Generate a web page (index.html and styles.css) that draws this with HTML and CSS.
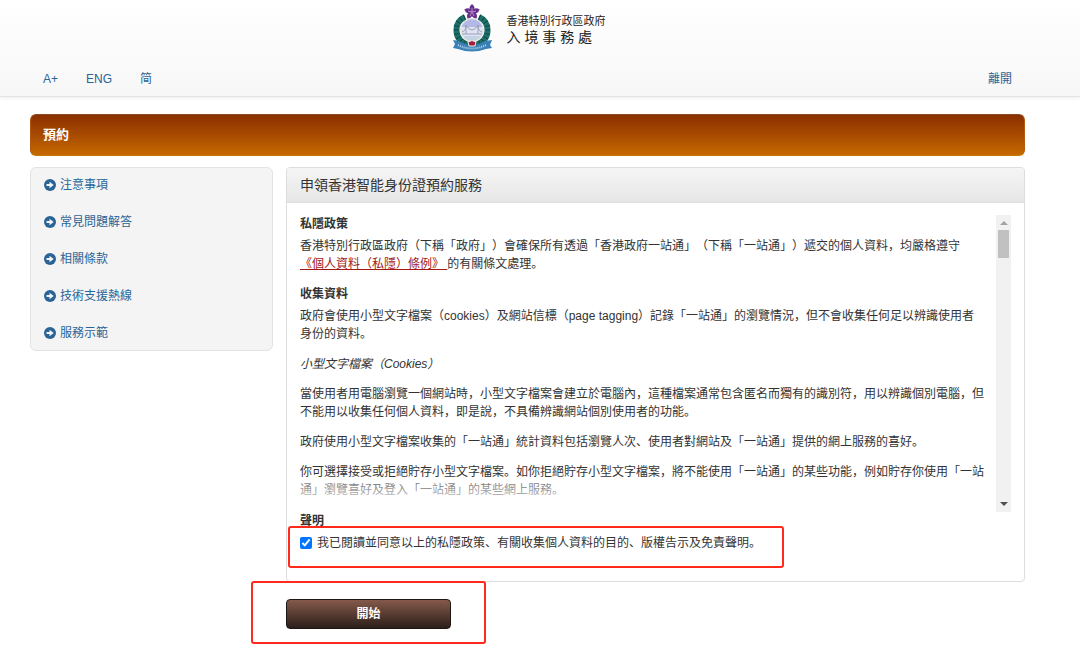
FILE: index.html
```html
<!DOCTYPE html>
<html lang="zh-CN">
<head>
    <meta charset="UTF-8">
    <meta name="viewport" content="width=device-width, initial-scale=1.0">
    <title>預約</title>
    <link rel="stylesheet" href="styles.css">
</head>
<body>
    <header class="header">
        <div class="brand">
            <svg class="emblem" viewBox="0 0 40 50" width="40" height="50" aria-hidden="true">
                <!-- wreath -->
                <path d="M12 13Q3 17 3.500 27Q4 37 15 41M26 13Q35 17 34.500 27Q34 37 23 41" fill="none" stroke="#1d6f68" stroke-width="6"/>
                <path d="M12 13Q3 17 3.500 27Q4 37 15 41M26 13Q35 17 34.500 27Q34 37 23 41" fill="none" stroke="#0f4a4c" stroke-width="5" stroke-dasharray="1 3"/>
                <!-- harbour -->
                <circle cx="19" cy="26" r="11.500" fill="#dfe3f4" stroke="#e9e4d6" stroke-width="1"/>
                <path d="M8.500 23a11 11 0 0 1 21 0z" fill="#b3b8e6"/>
                <path d="M9 30h20M13 21v9M25 21v9M9 28q4-1 4-7q6 10 12 0q0 6 4 7" fill="none" stroke="#9aa0b5" stroke-width="1"/>
                <path d="M10 32h18a11 11 0 0 1-18 0z" fill="#c4d3e4"/>
                <!-- ribbon -->
                <path d="M0 36l6 1q13 8 26 0l7-1-2 5 2 3-6 1q-14 5-28 0l-5-1 2-4z" fill="#3a7fb5"/>
                <path d="M5 41q14 7 28 0" fill="none" stroke="#b7d6ea" stroke-width="2" stroke-dasharray="1 1"/>
                <path d="M15 38q4-3 8 0l-1 4h-6z" fill="#a3203c" stroke="#eee" stroke-width="1"/>
                <!-- bauhinia -->
                <g fill="#66308c">
                    <path id="petal" d="M19 8Q14 4 19 0Q24 4 19 8z"/>
                    <use href="#petal" transform="rotate(72 19 8)"/>
                    <use href="#petal" transform="rotate(144 19 8)"/>
                    <use href="#petal" transform="rotate(216 19 8)"/>
                    <use href="#petal" transform="rotate(288 19 8)"/>
                </g>
                <path d="M19 8V4M19 8l4-1M19 8l2 4M19 8l-2 4M19 8l-4-1" stroke="#b58bc9" stroke-width="1"/>
            </svg>
            <div class="brand-text">
                <div class="brand-gov">香港特別行政區政府</div>
                <div class="brand-dept">入 境 事 務 處</div>
            </div>
        </div>
        <nav class="topnav">
            <a href="#">A+</a>
            <a href="#">ENG</a>
            <a href="#">简</a>
            <a href="#" class="exit">離開</a>
        </nav>
    </header>

    <main class="page">
        <h1 class="banner">預約</h1>
        <div class="columns">
            <ul class="sidebar">
                <li><a href="#"><svg class="arrow" viewBox="0 0 12 12" width="12" height="12" aria-hidden="true"><circle cx="6" cy="6" r="6"/><path d="M2.500 5h3V2.800L9.700 6 5.500 9.200V7h-3z"/></svg>注意事項</a></li>
                <li><a href="#"><svg class="arrow" viewBox="0 0 12 12" width="12" height="12" aria-hidden="true"><circle cx="6" cy="6" r="6"/><path d="M2.500 5h3V2.800L9.700 6 5.500 9.200V7h-3z"/></svg>常見問題解答</a></li>
                <li><a href="#"><svg class="arrow" viewBox="0 0 12 12" width="12" height="12" aria-hidden="true"><circle cx="6" cy="6" r="6"/><path d="M2.500 5h3V2.800L9.700 6 5.500 9.200V7h-3z"/></svg>相關條款</a></li>
                <li><a href="#"><svg class="arrow" viewBox="0 0 12 12" width="12" height="12" aria-hidden="true"><circle cx="6" cy="6" r="6"/><path d="M2.500 5h3V2.800L9.700 6 5.500 9.200V7h-3z"/></svg>技術支援熱線</a></li>
                <li><a href="#"><svg class="arrow" viewBox="0 0 12 12" width="12" height="12" aria-hidden="true"><circle cx="6" cy="6" r="6"/><path d="M2.500 5h3V2.800L9.700 6 5.500 9.200V7h-3z"/></svg>服務示範</a></li>
            </ul>

            <div class="content">
                <section class="card">
                    <h2 class="card-title">申領香港智能身份證預約服務</h2>
                    <div class="card-body">
                        <div class="policy">
                            <div class="policy-text">
                                <h3>私隱政策</h3>
                                <p>香港特別行政區政府（下稱「政府」）會確保所有透過「香港政府一站通」（下稱「一站通」）遞交的個人資料，均嚴格遵守<br><a href="#">《個人資料（私隱）條例》 </a>的有關條文處理。</p>
                                <h3>收集資料</h3>
                                <p>政府會使用小型文字檔案（cookies）及網站信標（page tagging）記錄「一站通」的瀏覽情況，但不會收集任何足以辨識使用者<br>身份的資料。</p>
                                <p><em>小型文字檔案（Cookies）</em></p>
                                <p>當使用者用電腦瀏覽一個網站時，小型文字檔案會建立於電腦內，這種檔案通常包含匿名而獨有的識別符，用以辨識個別電腦，但不能用以收集任何個人資料，即是說，不具備辨識網站個別使用者的功能。</p>
                                <p>政府使用小型文字檔案收集的「一站通」統計資料包括瀏覽人次、使用者對網站及「一站通」提供的網上服務的喜好。</p>
                                <p>你可選擇接受或拒絕貯存小型文字檔案。如你拒絕貯存小型文字檔案，將不能使用「一站通」的某些功能，例如貯存你使用「一站通」瀏覽喜好及登入「一站通」的某些網上服務。</p>
                            </div>
                            <div class="scrollbar" aria-hidden="true">
                                <span class="scroll-up"></span>
                                <span class="scroll-thumb"></span>
                                <span class="scroll-down"></span>
                            </div>
                        </div>
                        <h3>聲明</h3>
                        <div class="agree">
                            <input type="checkbox" id="agree" checked>
                            <label for="agree">我已閱讀並同意以上的私隱政策、有關收集個人資料的目的、版權告示及免責聲明。</label>
                            <span class="mark mark-agree"></span>
                        </div>
                    </div>
                </section>
                <div class="actions">
                    <button type="button" class="start">開始</button>
                    <span class="mark mark-start"></span>
                </div>
            </div>
        </div>
    </main>
</body>
</html>
```

FILE: styles.css
```css
* {
    box-sizing: border-box;
}
body {
    margin: 0;
    font-family: "Liberation Sans", "Noto Sans CJK SC", sans-serif;
    font-size: 12px;
    line-height: 18px;
    color: #333;
    background: #fff;
    text-spacing-trim: space-all;
}
h1, h2, h3, p, ul {
    margin: 0;
    padding: 0;
}
a {
    color: #2a6496;
    text-decoration: none;
}
.header {
    padding-top: 4px;
    background: linear-gradient(#fff, #f7f7f7);
    border-bottom: 1px solid #e3e3e3;
    box-shadow: 0 1px 4px rgba(0, 0, 0, 0.08);
}
.brand {
    display: flex;
    justify-content: center;
    gap: 14px;
    padding-right: 22px;
}
.brand-text {
    padding-top: 8px;
    color: #222;
}
.brand-gov {
    font-size: 11px;
    line-height: 18px;
}
.brand-dept {
    font-size: 14px;
    line-height: 14px;
}
.topnav {
    display: flex;
    gap: 28px;
    padding: 16px 68px 8px 43px;
}
.exit {
    margin-left: auto;
}
.page {
    padding: 17px 55px 24px 30px;
}
.banner {
    padding: 12px;
    border: 1px solid #b05a10;
    border-top-color: #8a4a28;
    border-bottom-color: #c97800;
    border-radius: 6px;
    background: linear-gradient(#8a2f00, #c66800);
    color: #fff;
    font-size: 13px;
    line-height: 16px;
}
.columns {
    display: flex;
    align-items: flex-start;
    gap: 13px;
    margin-top: 11px;
}
.sidebar {
    flex: 0 0 243px;
    display: flex;
    flex-direction: column;
    gap: 19px;
    padding: 8px 13px;
    border: 1px solid #e3e3e3;
    border-radius: 6px;
    background: #f4f4f4;
    list-style: none;
}
.sidebar a {
    display: flex;
    align-items: center;
    gap: 4px;
}
.arrow circle {
    fill: #2a6496;
}
.arrow path {
    fill: #f4f4f4;
}
.content {
    flex: 1;
    min-width: 0;
}
.card {
    border: 1px solid #ddd;
    border-radius: 4px;
}
.card-title {
    padding: 8px 13px;
    border-bottom: 1px solid #ddd;
    border-radius: 3px 3px 0 0;
    background: linear-gradient(#f5f5f5, #e6e6e6);
    font-size: 14px;
    font-weight: 400;
}
.card-body {
    padding: 12px 13px 29px;
}
.card-body h3 {
    font-size: 12px;
    margin-bottom: 4px;
}
.policy {
    display: flex;
    height: 297px;
}
.policy-text {
    position: relative;
    flex: 1;
    padding-right: 10px;
    overflow: hidden;
}
/* fades out the last visible line */
.policy-text::after {
    content: "";
    position: absolute;
    left: 0;
    right: 0;
    bottom: 0;
    height: 32px;
    background: linear-gradient(rgba(255, 255, 255, 0.3), #fff);
}
.policy-text p {
    margin-bottom: 12px;
}
.policy-text a {
    color: #a01818;
    text-decoration: underline;
    white-space: pre-wrap;
}
.scrollbar {
    flex: 0 0 15px;
    display: flex;
    flex-direction: column;
    align-items: center;
    padding: 6px 0;
    background: #f1f1f1;
}
.scroll-up,
.scroll-down {
    border: 4px solid transparent;
}
.scroll-up {
    border-top: 0;
    border-bottom-color: #a3a3a3;
}
.scroll-down {
    margin-top: auto;
    border-bottom: 0;
    border-top-color: #505050;
}
.scroll-thumb {
    width: 11px;
    height: 28px;
    margin-top: 5px;
    background: #c1c1c1;
}
.agree {
    position: relative;
    display: flex;
    align-items: center;
    gap: 5px;
}
.agree input {
    width: 12px;
    height: 12px;
    margin: 0;
    accent-color: #0075ff;
}
.actions {
    position: relative;
    padding-top: 17px;
}
.start {
    display: block;
    width: 165px;
    padding: 5px 12px;
    border: 1px solid #1f1713;
    border-radius: 4px;
    background: linear-gradient(#85594b, #2b1f1a);
    color: #fff;
    font: inherit;
    font-weight: 700;
    cursor: pointer;
}
/* red highlight boxes */
.mark {
    position: absolute;
    border: 2px solid #ff2a1c;
    border-radius: 3px;
    pointer-events: none;
}
.mark-agree {
    left: -12px;
    top: -8px;
    width: 496px;
    height: 42px;
}
.mark-start {
    left: -35px;
    top: -1px;
    width: 235px;
    height: 63px;
}
```
